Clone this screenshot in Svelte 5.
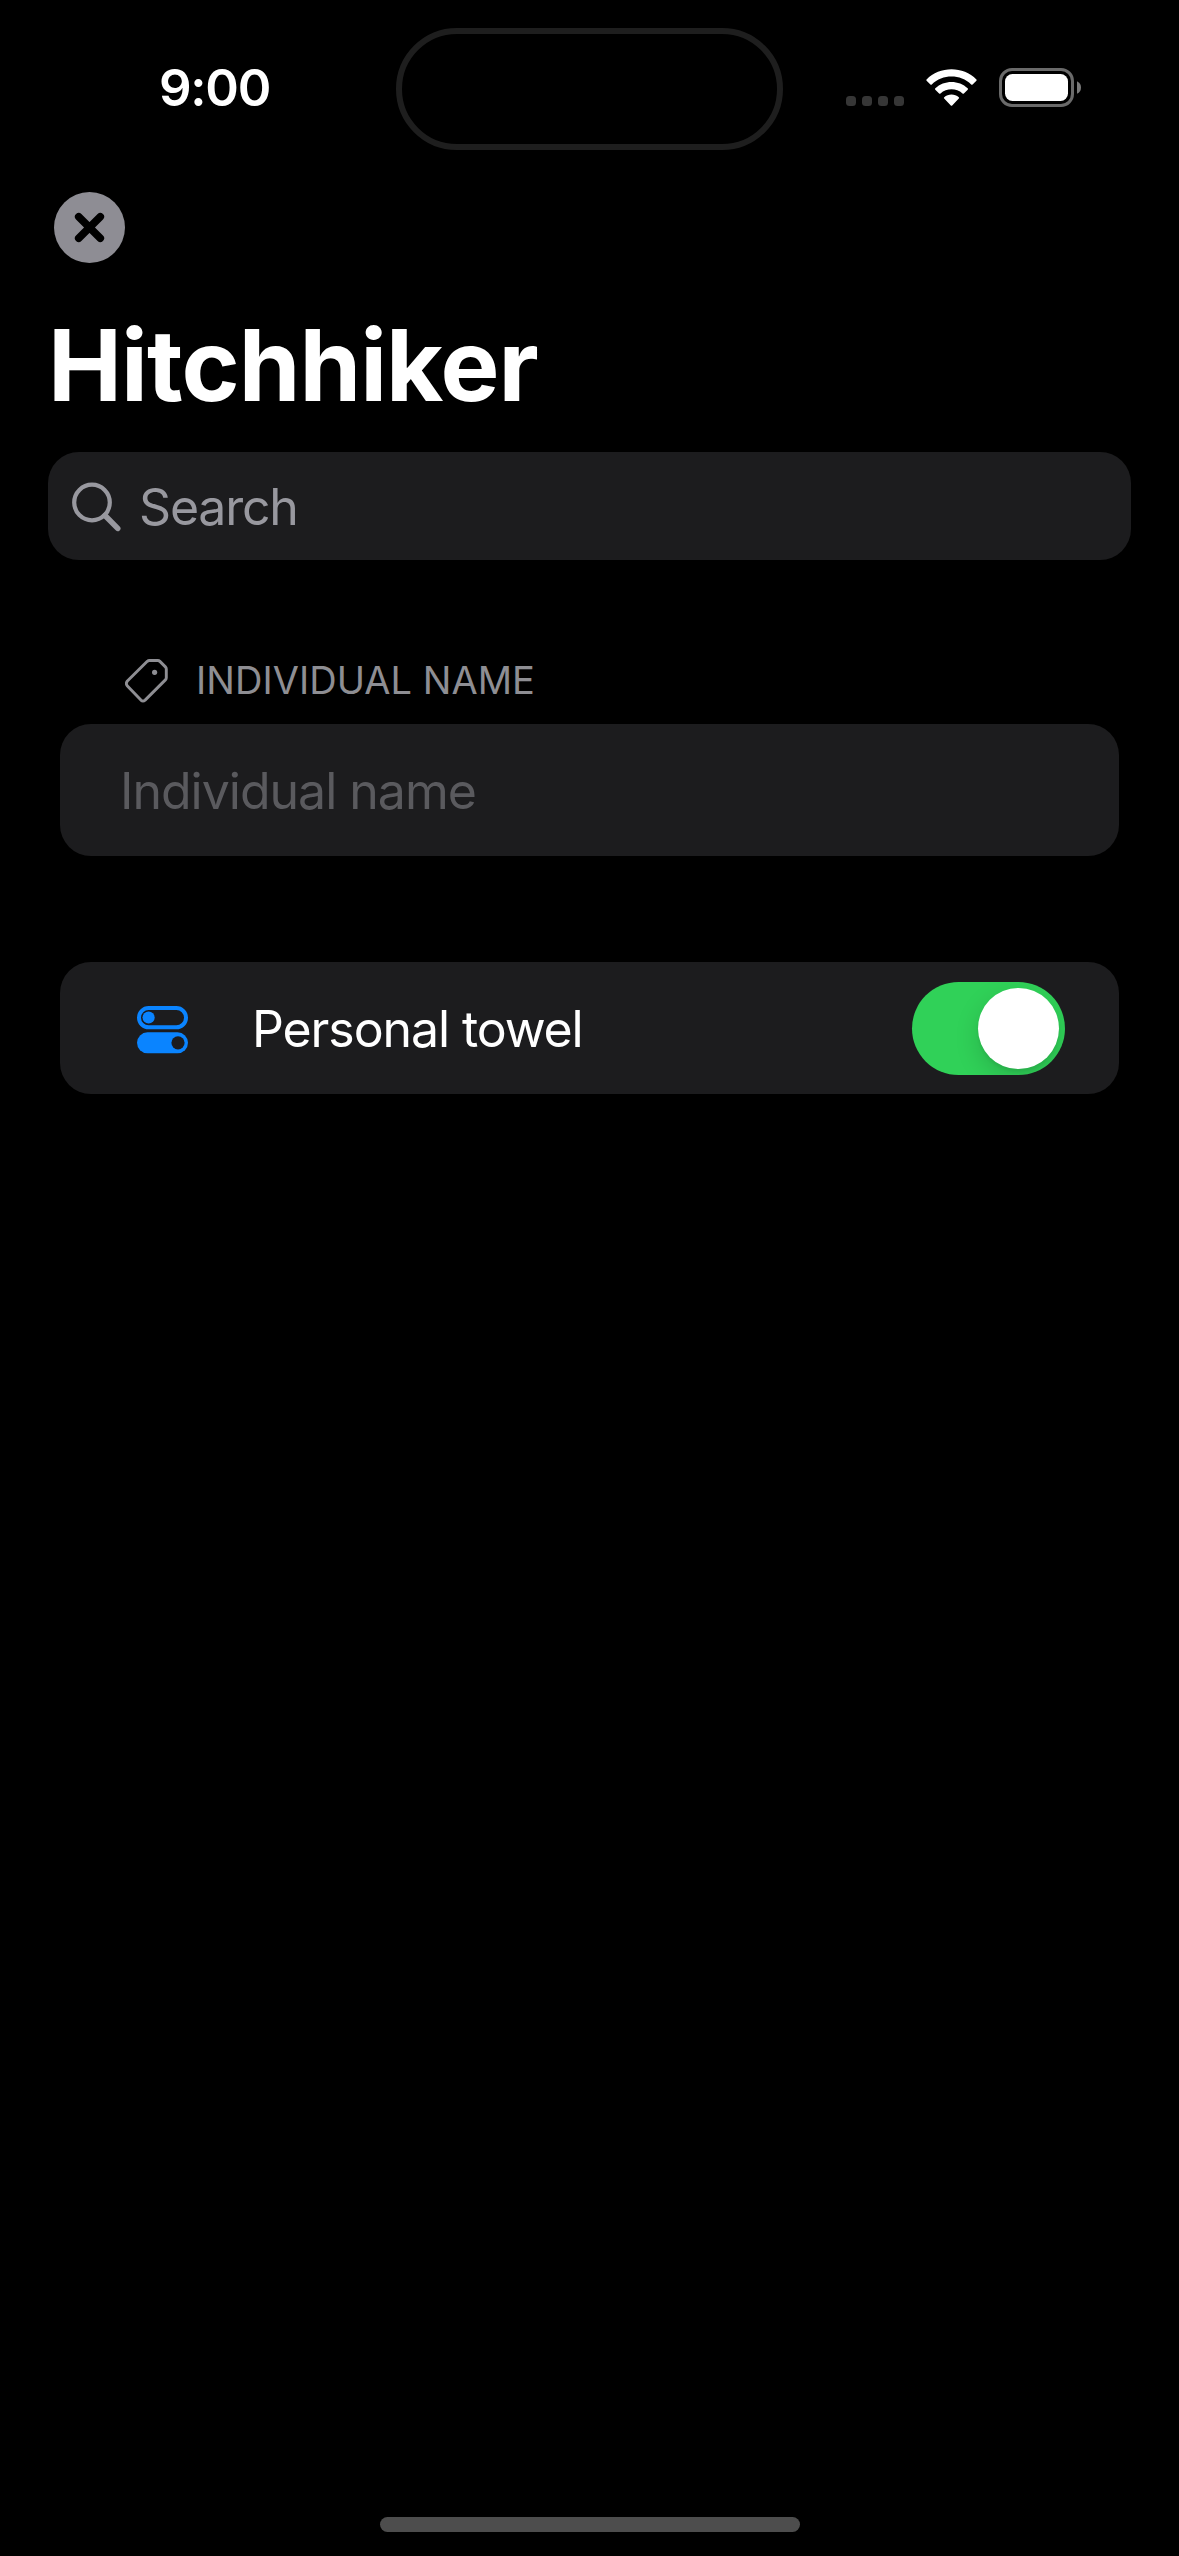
<script>
  let query = $state('');
  let name = $state('');
  let towel = $state(true);
</script>

<div class="screen">
  <header class="status">
    <div class="time">9:00</div>
    <div class="island"></div>
    <div class="indicators">
      <div class="dots"><i></i><i></i><i></i><i></i></div>
      <svg class="wifi" viewBox="0 0 51 38" width="51" height="38">
        <path fill="#fff" d="M.6 10.4C13.5-3.1 37.500-3.1 50.400 10.400Q51 11.100 50.400 11.800L46.600 15.400Q45.900 16 45.200 15.400C34.500 4.900 16.500 4.900 5.800 15.400Q5.100 16 4.400 15.400L.6 11.800Q0 11.100 .6 10.400Z" />
        <path fill="#fff" d="M9.300 19.300C18 10.800 33 10.800 41.700 19.300Q42.300 20 41.700 20.700L37.900 24.400Q37.200 25 36.500 24.400C30.400 18.900 20.600 18.900 14.500 24.400Q13.800 25 13.100 24.400L9.300 20.700Q8.700 20 9.300 19.300Z" />
        <path fill="#fff" d="M18.200 28.200C22.200 24.700 28.800 24.700 32.800 28.200Q33.500 28.900 32.800 29.600L26.200 36.500Q25.500 37.200 24.800 36.500L18.200 29.600Q17.500 28.900 18.200 28.200Z" />
      </svg>
      <svg class="battery" viewBox="0 0 82 39" width="82" height="39">
        <rect x="1.5" y="1.5" width="72" height="36" rx="11.500" fill="none" stroke="#6a6a6a" stroke-width="3" />
        <rect x="6" y="6" width="63" height="27" rx="7.500" fill="#fff" />
        <path d="M78 13.200Q82 15.200 82 19.500T78 25.800Z" fill="#7a7a7a" />
      </svg>
    </div>
  </header>

  <button class="close" aria-label="Close">
    <svg viewBox="0 0 71 71" width="71" height="71">
      <circle cx="35.500" cy="35.500" r="35.500" fill="#8e8d94" />
      <path d="M24.700 24.700 46.300 46.300M46.300 24.700 24.700 46.300" stroke="#000" stroke-width="7.600" stroke-linecap="round" />
    </svg>
  </button>

  <h1>Hitchhiker</h1>

  <label class="search">
    <svg viewBox="0 0 50 50" width="50" height="50" fill="none" stroke="#98989f">
      <circle cx="20" cy="20.500" r="17.800" stroke-width="4.200" />
      <path d="M33 33.500 45.700 46.400" stroke-width="5.600" stroke-linecap="round" />
    </svg>
    <input bind:value={query} placeholder="Search" />
  </label>

  <div class="section">
    <svg viewBox="0 0 44 44" width="44" height="44" fill="none" stroke="#8e8e93" stroke-width="2.900" stroke-linejoin="round">
      <path d="M22.300 2.300Q23.200 1.500 24.400 1.500H32.800Q34 1.500 34.900 2.400L40.400 7.900Q41.300 8.800 41.300 10V18.800Q41.300 20 40.400 20.900L20.100 41.100Q18 43 15.900 41.100L2.400 26.900Q.3 24.600 2.400 22Z" />
      <circle cx="29.600" cy="13.300" r="2.600" fill="#8e8e93" stroke="none" />
    </svg>
    <h2>INDIVIDUAL NAME</h2>
  </div>

  <label class="card field">
    <input bind:value={name} placeholder="Individual name" />
  </label>

  <div class="card row">
    <svg class="toggles" viewBox="0 0 51 48" width="51" height="48">
      <rect x="2" y="2" width="47" height="19.300" rx="9.650" fill="none" stroke="#0a84ff" stroke-width="4" />
      <circle cx="11.600" cy="11.500" r="6.100" fill="#0a84ff" />
      <rect x="0" y="26.300" width="51" height="21" rx="10.500" fill="#0a84ff" />
      <circle cx="41" cy="36.800" r="6.600" fill="#1c1c1e" />
    </svg>
    <span class="label">Personal towel</span>
    <button class="switch" class:on={towel} role="switch" aria-checked={towel} aria-label="Personal towel" onclick={() => (towel = !towel)}>
      <span class="knob"></span>
    </button>
  </div>

  <div class="home"></div>
</div>

<style>
  :global(body) {
    background: #000;
  }
  .screen {
    box-sizing: border-box;
    width: 1179px;
    height: 2556px;
    padding: 28px 48px 24px;
    display: flex;
    flex-direction: column;
    align-items: stretch;
    overflow: hidden;
    background: #000;
    color: #fff;
    font-family: Inter, "Liberation Sans", sans-serif;
  }
  .status {
    display: grid;
    grid-template-columns: 348px 387px 1fr;
    height: 122px;
    flex: none;
  }
  .time {
    padding-left: 111px;
    line-height: 120px;
    font-size: 51px;
    font-weight: 600;
    letter-spacing: -1.3px;
  }
  .island {
    border: 6px solid #1e1e1e;
    border-radius: 61px;
  }
  .indicators {
    display: flex;
    align-items: flex-start;
    padding: 40px 0 0 63px;
  }
  .dots {
    display: flex;
    gap: 6px;
    padding-top: 28px;
  }
  .dots i {
    width: 10px;
    height: 10px;
    border-radius: 3.5px;
    background: #363636;
  }
  .wifi {
    margin: 1px 22px 0 22px;
  }
  button {
    padding: 0;
    border: 0;
    background: none;
  }
  svg {
    display: block;
    flex: none;
  }
  .close {
    width: 71px;
    height: 71px;
    margin: 42px 0 0 6px;
    flex: none;
  }
  h1 {
    margin: 42px 0 0;
    height: 120px;
    line-height: 120px;
    font-size: 99px;
    font-weight: 700;
    letter-spacing: -0.9px;
  }
  .search {
    display: flex;
    align-items: center;
    height: 108px;
    margin-top: 27px;
    padding-left: 24px;
    box-sizing: border-box;
    border-radius: 31px;
    background: #1c1c1e;
    flex: none;
  }
  input {
    flex: 1;
    min-width: 0;
    padding: 2px 0 0;
    border: 0;
    outline: 0;
    background: none;
    color: #fff;
    font: 400 50px/60px Inter, "Liberation Sans", sans-serif;
    letter-spacing: -1px;
  }
  input::placeholder {
    color: #5a5a5e;
    opacity: 1;
  }
  .search svg {
    margin-top: 2px;
  }
  .search input {
    margin-left: 17px;
    letter-spacing: -1.2px;
  }
  .search input::placeholder {
    color: #98989f;
  }
  .section {
    display: flex;
    align-items: center;
    gap: 27px;
    height: 44px;
    margin: 98px 0 22px 77px;
    flex: none;
  }
  .section svg {
    margin-top: 2px;
  }
  h2 {
    margin: 0;
    color: #8e8e93;
    font-size: 38px;
    line-height: 44px;
    font-weight: 400;
    letter-spacing: 0.05px;
  }
  .card {
    display: flex;
    align-items: center;
    box-sizing: border-box;
    height: 132px;
    margin: 0 12px;
    border-radius: 31px;
    background: #1c1c1e;
    flex: none;
  }
  .field {
    padding-left: 60px;
  }
  .row {
    margin-top: 106px;
    padding: 0 54px 0 77px;
  }
  .toggles {
    margin-top: 3px;
  }
  .label {
    flex: 1;
    margin-left: 64px;
    padding-top: 2px;
    font-size: 50px;
    line-height: 60px;
    letter-spacing: -1.1px;
  }
  .switch {
    display: flex;
    box-sizing: border-box;
    width: 153px;
    height: 93px;
    padding: 6px;
    border-radius: 47px;
    background: #39393d;
    overflow: hidden;
  }
  .switch.on {
    justify-content: flex-end;
    background: #30d158;
  }
  .knob {
    width: 81px;
    height: 81px;
    border-radius: 50%;
    background: #fff;
    box-shadow: 0 9px 24px rgba(0, 0, 0, 0.15), 0 3px 3px rgba(0, 0, 0, 0.06);
  }
  .home {
    width: 420px;
    height: 15px;
    margin: auto auto 0 332px;
    border-radius: 8px;
    background: #4d4d4d;
  }
</style>
